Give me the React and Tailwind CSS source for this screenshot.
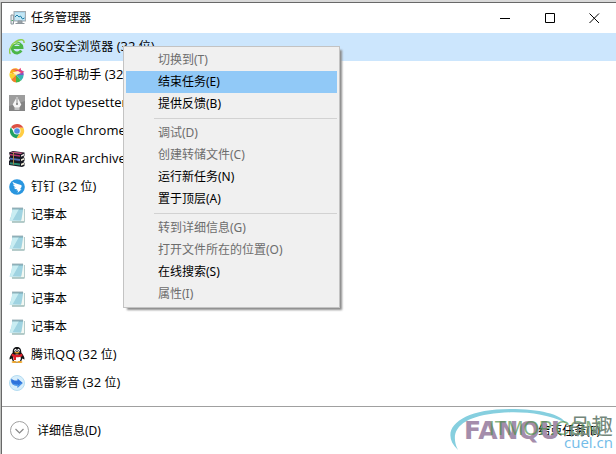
import React from "react";

function MonitorIcon() {
  return (
    <svg width="16" height="16" viewBox="0 0 16 16" aria-hidden="true">
      <path d="M1 5h2.500v9H1z" fill="#e8ecef" stroke="#8a959c" strokeWidth="1" />
      <path d="M1.500 10.500h1.500" stroke="#4fae68" />
      <rect x="4" y="1.500" width="11.500" height="9.500" fill="#a9d4ea" stroke="#a3abb0" />
      <path d="M5 3h9.500v7H5z" fill="#c4e7f5" />
      <path d="M5 7l2-2 2 2 1.500-1 2 3 2-1" fill="none" stroke="#207fa8" strokeWidth="1" />
      <path d="M8 11h4v2H8zM5.500 13.500h9" fill="#a5adb3" stroke="#8d969c" />
    </svg>
  );
}

function BrowserIcon() {
  return (
    <svg width="16" height="16" viewBox="0 0 16 16" aria-hidden="true">
      <path d="M12.300 11.600A5 5 0 1 1 13 8.500H4" fill="none" stroke="#4cb648" strokeWidth="2.800" />
      <path d="M1.500 14.800C-1 13 1.500 6 7 2.500 11 0 15.500-.3 15 4" fill="none" stroke="#8fd04f" strokeWidth="1.500" />
      <path d="M4.500 4.800Q7.500 3 10.800 4.800" fill="none" stroke="#d5f3b1" strokeWidth=".8" />
    </svg>
  );
}

function PhoneHelperIcon() {
  return (
    <svg width="16" height="16" viewBox="0 0 16 16" aria-hidden="true">
      <path d="M7 8L.8 6C1.500 2 5 .8 8 1.500L12.500 4z" fill="#f8a91c" />
      <path d="M7 8L.7 6Q-.3 10 2.500 12.500z" fill="#f6d52c" />
      <path d="M7 8L2.300 12.400Q4 15.400 7.500 15.500z" fill="#ef8128" />
      <path d="M7 8v7.500q3.500 0 5-2z" fill="#42b947" />
      <path d="M7 8l5 5.700q2.500-2 2.700-5.700z" fill="#36b4b4" />
      <path d="M7 8h7.800q.4-3-2-5z" fill="#7c59c2" />
      <path d="M3 2l6.500 1 2-2.300.8 3.200 3.200.6-3.200 2z" fill="#ea417b" />
      <path d="M3.500 5.500L9 4l3 2-5 2z" fill="#fff3c6" />
    </svg>
  );
}

function PenIcon() {
  return (
    <svg width="16" height="16" viewBox="0 0 16 16" aria-hidden="true">
      <path d="M0 0h16v16H0z" fill="#858585" />
      <path d="M0 0h16v6L0 11z" fill="#9d9d9d" />
      <path d="M8 1.800L3.700 9.500l2 3.200h4.600l2-3.200z" fill="#f6f6f6" />
      <path d="M8 3v5.500" stroke="#777" strokeWidth=".8" />
      <circle cx="8" cy="9" r="1" fill="#777" />
      <path d="M5.500 14h5" stroke="#eee" strokeWidth="1.200" />
    </svg>
  );
}

function ChromeIcon() {
  return (
    <svg width="16" height="16" viewBox="0 0 16 16" aria-hidden="true">
      <path d="M8 8L2 4.200A7.200 7.200 0 0 1 14.400 4.800H8z" fill="#dd5144" />
      <path d="M8 8l3-3.200h3.400A7.200 7.200 0 0 1 7.500 15.200L11 9.500z" fill="#ffcd43" />
      <path d="M8 8l2.500 2.500-3 4.700A7.200 7.200 0 0 1 1.900 4.300L5 9.500z" fill="#20a162" />
      <circle cx="8" cy="8" r="3.600" fill="#f3f5f8" />
      <circle cx="8" cy="8" r="2.800" fill="#4f8ce5" />
    </svg>
  );
}

function ArchiveIcon() {
  return (
    <svg width="16" height="16" viewBox="0 0 16 16" aria-hidden="true">
      <path d="M0 1.500L4 0l11.500 1.500V5l-1 1 1 1v3l-1 1 1 1v3L13 16 0 14v-4l1-1-1-2 1-2z" fill="#171922" />
      <path d="M1 1.500L4 .7l10 1.100L11.500 3z" fill="#cf5a8b" />
      <path d="M.8 2.700L11 4.200v1.600L.8 4.300z" fill="#b93470" />
      <path d="M12 4.200l3-1.400v1.600l-3 1.400z" fill="#f3e6e8" />
      <path d="M1 6.700L11 8.100v2L1 8.600z" fill="#4f6fb5" />
      <path d="M12 8.200l3-1.200v1.800l-3 1.300z" fill="#f1eeda" />
      <path d="M1 11.200l10 1.400v2L1 13.200z" fill="#298b72" />
      <path d="M12 12.700l3-1.200v2L12 14.700z" fill="#f1eeda" />
      <path d="M4.500 1.500v12" stroke="#a98344" strokeWidth="1" />
    </svg>
  );
}

function DingIcon() {
  return (
    <svg width="16" height="16" viewBox="0 0 16 16" aria-hidden="true">
      <circle cx="8" cy="8" r="7.800" fill="#2a96df" />
      <path d="M3.500 2.800c2 1.500 5 2.200 8.500 3.200 1 .4.800 1.500-.1 3L11 10.200h1.600L8.500 14l.7-2.500H7.500l.8-1.300c-2 .1-2.900-.8-3.300-1.800l2 .1C5 7.500 4.200 6.500 4.200 5.400l2 .6C4.500 5 3.500 4 3.500 2.800z" fill="#fff" />
    </svg>
  );
}

function NoteIcon() {
  return (
    <svg width="16" height="16" viewBox="0 0 16 16" aria-hidden="true">
      <path d="M13.500 2H15.500V15.500H3V14H12z" fill="#6f9a98" />
      <path d="M13.500 1.500H15V14.500H2V13.500H12z" fill="#f2f8f3" />
      <path d="M3.500 1.500H14.200Q13.500 8 12 13.800L.5 13.500Q3 8 3.500 1.500z" fill="#9fd3e1" />
      <path d="M3.500 2H10L3.500 13.500H.8Q3 8 3.500 2z" fill="#c9edf2" />
      <path d="M3.500 1.500H14" stroke="#4d7580" strokeWidth="2" strokeDasharray="1 1" />
    </svg>
  );
}

function PenguinIcon() {
  return (
    <svg width="16" height="16" viewBox="0 0 16 16" aria-hidden="true">
      <path d="M8 0C4.500 0 3.600 2.600 3.700 5.500 2.300 7.500.2 9.900.5 12.500l2.300-1C3 14 5 15.500 8 15.500s5-1.500 5.200-4l2.300 1c.3-2.600-1.800-5-3.200-7C12.400 2.600 11.500 0 8 0z" fill="#121315" />
      <ellipse cx="8" cy="11.300" rx="3.800" ry="3.700" fill="#fff" />
      <path d="M3 6.500c2.800 1.700 7.200 1.700 10 0l.5 2.500c-2 1.200-4.500 1.400-6.500 1.300V13H4.500V9.700L2.500 9z" fill="#df2029" />
      <ellipse cx="6.500" cy="3.300" rx="1.200" ry="1.500" fill="#fff" />
      <ellipse cx="9.500" cy="3.300" rx="1.200" ry="1.500" fill="#fff" />
      <circle cx="6.800" cy="3.500" r=".5" />
      <circle cx="9.200" cy="3.500" r=".5" />
      <path d="M5 5.500q3-1.200 6 0-3 2-6 0z" fill="#f5ae26" />
      <ellipse cx="5.200" cy="15" rx="2.700" ry="1" fill="#efa526" />
      <ellipse cx="10.800" cy="15" rx="2.700" ry="1" fill="#efa526" />
    </svg>
  );
}

function VideoIcon() {
  return (
    <svg width="16" height="16" viewBox="0 0 16 16" aria-hidden="true">
      <circle cx="8" cy="8" r="7.500" fill="#d7eefb" stroke="#b4dcf1" />
      <path d="M2.500 3.500C4 5.500 6 5.700 8.500 5.400V3.500L13.800 8 8.500 13v-2.300C4.500 11 .8 8.500 2.500 3.500z" fill="#2f74dc" />
      <path d="M3.500 8.500c1.500 1.500 3 1.700 5.500 1.500v1.500l3.500-3.300" fill="none" stroke="#5aa9f0" />
    </svg>
  );
}

const tasks = [
  { Icon: BrowserIcon, parts: ["360", "安全浏览器", " (32 ", "位", ")"], selected: true },
  { Icon: PhoneHelperIcon, parts: ["360", "手机助手", " (32 ", "位", ")"] },
  { Icon: PenIcon, parts: ["gidot typesetter"] },
  { Icon: ChromeIcon, parts: ["Google Chrome"] },
  { Icon: ArchiveIcon, parts: ["WinRAR archiver"] },
  { Icon: DingIcon, parts: ["", "钉钉", " (32 ", "位", ")"] },
  { Icon: NoteIcon, parts: ["", "记事本"] },
  { Icon: NoteIcon, parts: ["", "记事本"] },
  { Icon: NoteIcon, parts: ["", "记事本"] },
  { Icon: NoteIcon, parts: ["", "记事本"] },
  { Icon: NoteIcon, parts: ["", "记事本"] },
  { Icon: PenguinIcon, parts: ["", "腾讯", "QQ (32 ", "位", ")"] },
  { Icon: VideoIcon, parts: ["", "迅雷影音", " (32 ", "位", ")"] },
];

const menuGroups = [
  [
    { label: "切换到(T)", disabled: true },
    { label: "结束任务(E)", active: true },
    { label: "提供反馈(B)" },
  ],
  [
    { label: "调试(D)", disabled: true },
    { label: "创建转储文件(C)", disabled: true },
    { label: "运行新任务(N)" },
    { label: "置于顶层(A)" },
  ],
  [
    { label: "转到详细信息(G)", disabled: true },
    { label: "打开文件所在的位置(O)", disabled: true },
    { label: "在线搜索(S)" },
    { label: "属性(I)", disabled: true },
  ],
];

function TitleBar() {
  return (
    <header className="flex h-[30px] items-center pl-2">
      <MonitorIcon />
      <h1 className="ml-[5px] flex-1 text-[12px] leading-4">任务管理器</h1>
      <button aria-label="最小化" className="flex h-full w-[45px] items-center justify-center">
        <svg width="11" height="11" viewBox="0 0 11 11"><path d="M0 5.500h10" stroke="#000" /></svg>
      </button>
      <button aria-label="最大化" className="flex h-full w-[45px] items-center justify-center">
        <svg width="11" height="11" viewBox="0 0 11 11"><path d="M.5.5h9v9h-9z" fill="none" stroke="#000" /></svg>
      </button>
      <button aria-label="关闭" className="flex h-full w-[43px] items-center justify-center">
        <svg width="11" height="11" viewBox="0 0 11 11"><path d="M.5.5l9.500 9.500M10 .5L.5 10" stroke="#000" /></svg>
      </button>
    </header>
  );
}

function TaskRow({ Icon, parts, selected }) {
  return (
    <li className={`flex h-7 items-center gap-[6px] pl-[7px] ${selected ? "bg-[#cce6fd]" : ""}`}>
      <Icon />
      <span className="whitespace-pre pb-px text-[12px] leading-4">
        {parts.map((part, i) => (
          <span key={i} className={i % 2 ? "" : "font-['Open_Sans'] text-[13px]"}>{part}</span>
        ))}
      </span>
    </li>
  );
}

function ContextMenu() {
  return (
    <div role="menu" className="absolute top-[13px] left-[121px] w-[217px] border border-[#c3c3c3] bg-[#f0f0f0] p-[2px] shadow-[3px_3px_2px_-1px_#8b8b8b]">
      {menuGroups.map((group, i) => (
        <React.Fragment key={i}>
          {i > 0 && <hr className="my-[3px] ml-7 border-[#d2d2d2]" />}
          {group.map(({ label, disabled, active }) => (
            <button
              key={label}
              role="menuitem"
              disabled={disabled}
              className={`flex h-[22px] w-full items-center pl-8 text-[12px] leading-4 ${
                disabled ? "text-[#6d6d6d]" : "text-black"
              } ${active ? "bg-[#91c9f7]" : ""}`}
            >
              {label}
            </button>
          ))}
        </React.Fragment>
      ))}
    </div>
  );
}

function Watermark() {
  return (
    <div aria-hidden="true" className="pointer-events-none absolute right-0 bottom-0 h-[46px] w-[168px] whitespace-nowrap">
      <svg className="absolute inset-0" width="168" height="46" viewBox="0 0 168 46">
        <path d="M10 42C-10 23 10 1 62 1c30 0 50 5 56 14C98 5 72 3 51 5 14 8 0 22 10 42z" fill="#86cfdf" />
      </svg>
      <span className="absolute top-[7px] left-4 font-['DejaVu_Sans'] text-[25px] leading-8 font-bold text-[#a48dab]">FANQU</span>
      <span className="absolute top-2 left-[41px] font-['Liberation_Sans'] text-[20px] leading-6 text-[#4f8f4c]/70">ITMOP.COM</span>
      <span className="absolute top-[3px] left-[121px] text-[22px] leading-7 text-[#73877b]">品趣</span>
      <span className="absolute top-6 left-[116px] font-['Open_Sans'] text-[15px] leading-5 font-medium text-[#73bce8]">cuel.cn</span>
    </div>
  );
}

export default function App() {
  return (
    <div className="flex min-h-screen bg-[#d9d9d9] pt-[2px] font-['Noto_Sans','Noto_Sans_CJK_SC',sans-serif] text-black">
      <div className="w-px bg-[#bec0bd]" />
      <main className="relative flex min-w-0 flex-1 flex-col border-t border-l border-[#686868] bg-white">
        <TitleBar />
        <section aria-label="任务" className="relative flex-1">
          <ul>
            {tasks.map((task, i) => <TaskRow key={i} {...task} />)}
          </ul>
          <ContextMenu />
        </section>
        <footer className="flex h-12 items-center border-t border-[#a0a0a0] pr-4 pl-2">
          <button className="flex items-center gap-2 text-[12px] leading-4">
            <svg width="19" height="19" viewBox="0 0 19 19" aria-hidden="true">
              <circle cx="9.500" cy="9.500" r="9" fill="#fff" stroke="#a0a0a0" />
              <path d="M5.500 8l4 4 4-4" fill="none" stroke="#888" strokeWidth="1.200" />
            </svg>
            详细信息(D)
          </button>
          <button className="ml-auto text-[12px] leading-4">结束任务(E)</button>
        </footer>
        <Watermark />
      </main>
    </div>
  );
}
